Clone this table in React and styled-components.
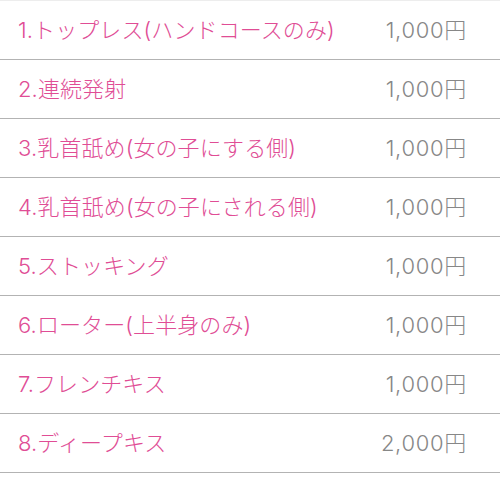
import React from "react";
import styled, { createGlobalStyle } from "styled-components";

const Global = createGlobalStyle`
  html, body { margin: 0; padding: 0; background: #fff; }
  body { font-family: "Inter", "Noto Sans CJK JP", sans-serif; font-weight: 300; }
`;

const List = styled.ul`
  list-style: none;
  margin: 0;
  padding: 0;
  border-top: 1px solid #ededed;
`;

const Row = styled.li`
  box-sizing: border-box;
  display: flex;
  align-items: center;
  justify-content: space-between;
  height: 59px;
  padding: 0 33px 4px 18px;
  border-bottom: 1px solid #b3b3b3;
`;

const Name = styled.span`
  color: #e04d95;
  font-size: 22px;
  letter-spacing: 0.1px;
`;

const Price = styled.span`
  color: #878787;
  font-size: 22px;
  letter-spacing: 0.7px;
`;

const items = [
  ["1.トップレス(ハンドコースのみ)", "1,000円"],
  ["2.連続発射", "1,000円"],
  ["3.乳首舐め(女の子にする側)", "1,000円"],
  ["4.乳首舐め(女の子にされる側)", "1,000円"],
  ["5.ストッキング", "1,000円"],
  ["6.ローター(上半身のみ)", "1,000円"],
  ["7.フレンチキス", "1,000円"],
  ["8.ディープキス", "2,000円"],
];

export default function App() {
  return (
    <>
      <Global />
      <List>
        {items.map(([n, p]) => (
          <Row key={n}>
            <Name>{n}</Name>
            <Price>{p}</Price>
          </Row>
        ))}
      </List>
    </>
  );
}
